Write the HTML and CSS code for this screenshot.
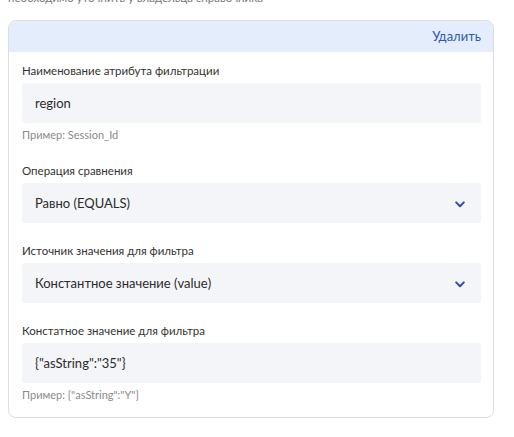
FILE: index.html
```html
<!DOCTYPE html>
<html lang="ru">
<head>
<meta charset="utf-8">
<link rel="stylesheet" href="styles.css">
</head>
<body>
<p class="note">необходимо уточнить у владельца справочника</p>
<section class="card">
  <div class="card-head"><a class="delete">Удалить</a></div>
  <div class="card-body">
    <div class="field">
      <div class="label">Наименование атрибута фильтрации</div>
      <div class="input">region</div>
      <div class="hint">Пример: Session_Id</div>
    </div>
    <div class="field">
      <div class="label">Операция сравнения</div>
      <div class="input select">
        <span>Равно (EQUALS)</span>
        <svg class="chev" width="10" height="7" viewBox="0 0 10 7"><path d="M1.2 1.4 L5 5.2 L8.8 1.4" fill="none" stroke="#2a4eaf" stroke-width="2" stroke-linecap="round" stroke-linejoin="round"/></svg>
      </div>
    </div>
    <div class="field">
      <div class="label">Источник значения для фильтра</div>
      <div class="input select">
        <span>Константное значение (value)</span>
        <svg class="chev" width="10" height="7" viewBox="0 0 10 7"><path d="M1.2 1.4 L5 5.2 L8.8 1.4" fill="none" stroke="#2a4eaf" stroke-width="2" stroke-linecap="round" stroke-linejoin="round"/></svg>
      </div>
    </div>
    <div class="field">
      <div class="label">Констатное значение для фильтра</div>
      <div class="input">{"asString":"35"}</div>
      <div class="hint">Пример: {"asString":"Y"}</div>
    </div>
  </div>
</section>
</body>
</html>
```
FILE: styles.css
```css
* { box-sizing: border-box; }
html, body { background: #fff; }
body {
  margin: 0;
  padding: 0 8px;
  font-family: Lato, "Noto Sans", sans-serif;
  color: #333;
  overflow: hidden;
}
.note {
  margin: -9px 0 0 0;
  font-size: 11.5px;
  line-height: 14px;
  color: #777;
}
.card {
  width: 486px;
  margin-top: 15px;
  border: 1px solid #dcdde1;
  border-radius: 8px;
  overflow: hidden;
}
.card-head {
  height: 31px;
  background: #e4edfc;
  display: flex;
  align-items: center;
  justify-content: flex-end;
  padding: 0 12px 1px;
}
.delete {
  font-size: 13px;
  color: #2b5ab5;
  cursor: pointer;
}
.card-body {
  display: flex;
  flex-direction: column;
  gap: 20px;
  padding: 11px 12px 14px 13px;
}
.field {
  display: flex;
  flex-direction: column;
}
.label {
  font-size: 11.5px;
  line-height: 16px;
  margin-bottom: 4px;
  color: #333;
}
.input {
  height: 40px;
  background: #f3f5f9;
  border-radius: 3px;
  display: flex;
  align-items: center;
  padding: 0 13px;
  font-size: 13px;
  color: #2b2b2b;
}
.select {
  justify-content: space-between;
  padding-right: 16px;
}
.chev { display: block; margin-top: 2px; }
.hint {
  margin-top: 3px;
  font-size: 11px;
  line-height: 17px;
  color: #8a8a8a;
}
```
